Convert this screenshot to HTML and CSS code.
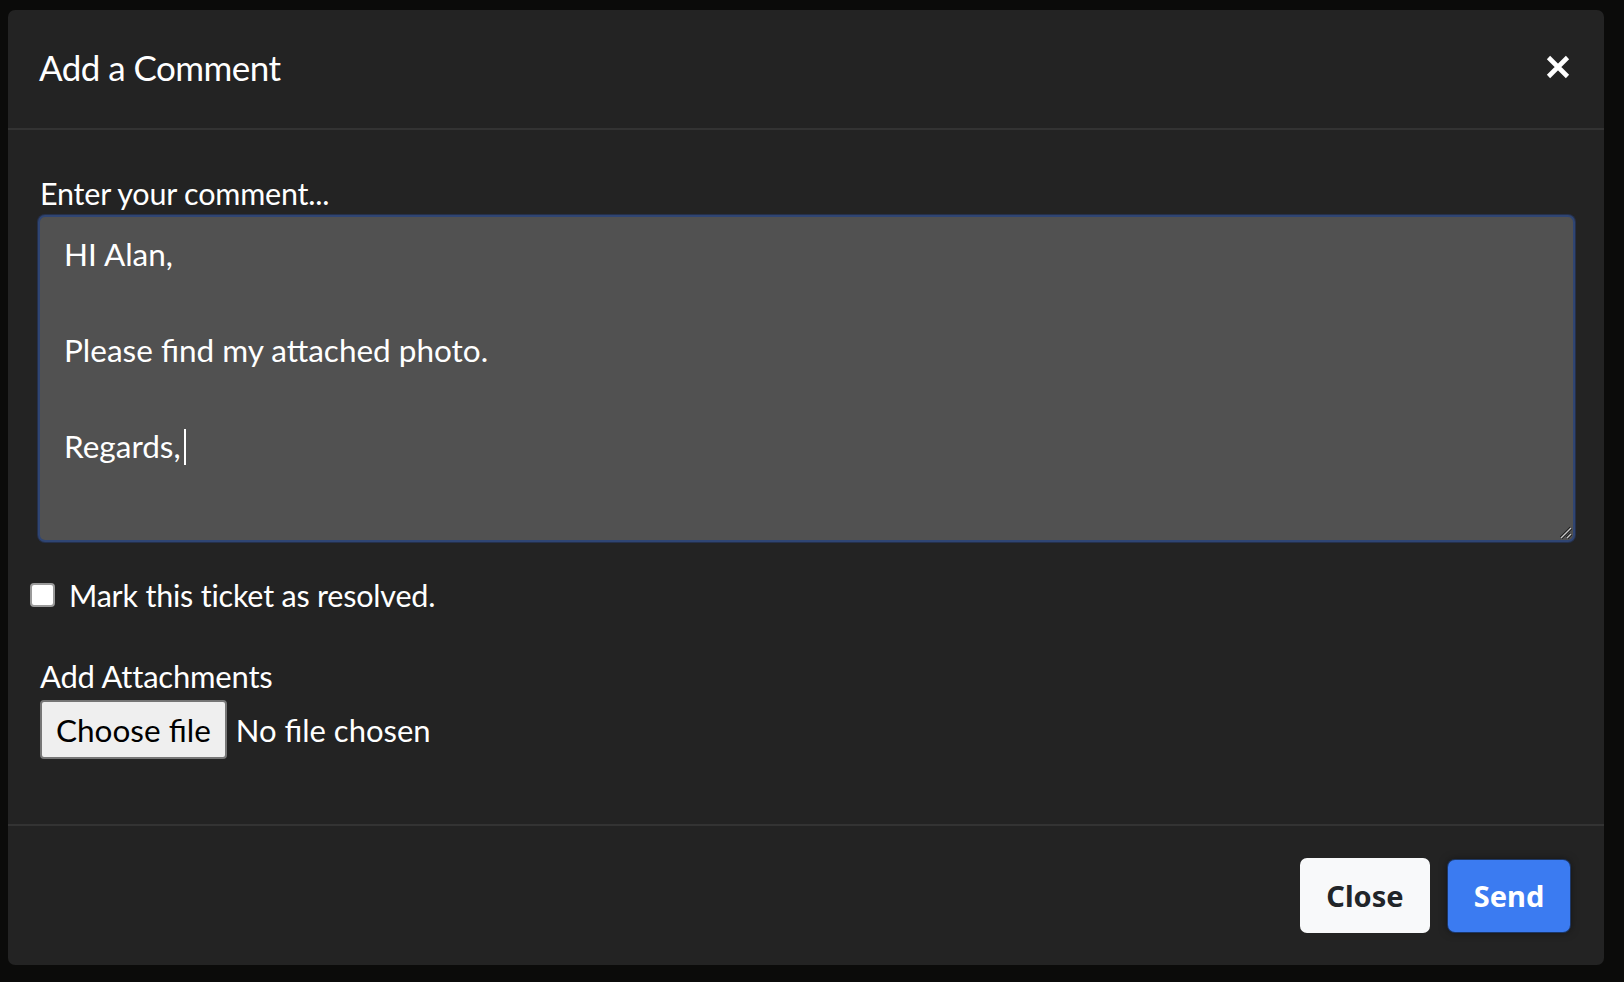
FILE: index.html
```html
<!DOCTYPE html>
<html lang="en">
<head>
<meta charset="utf-8">
<title>Add a Comment</title>
<link rel="stylesheet" href="styles.css">
</head>
<body>
<div class="modal">
  <div class="modal-header">
    <h1 class="modal-title">Add a Comment</h1>
    <button class="btn-x" aria-label="Close">
      <svg width="24" height="24" viewBox="0 0 24 24"><path d="M2.5 2.5 L21.5 21.5 M21.5 2.5 L2.5 21.5" stroke="#fff" stroke-width="4.6" stroke-linecap="butt"/></svg>
    </button>
  </div>
  <div class="modal-body">
    <label class="field-label">Enter your comment...</label>
    <div class="textbox" role="textbox">
      <div class="line">HI Alan,</div>
      <div class="line">&nbsp;</div>
      <div class="line">Please find my attached photo.</div>
      <div class="line">&nbsp;</div>
      <div class="line">Regards,<span class="caret"></span></div>
      <svg class="grip" width="14" height="14" viewBox="0 0 14 14"><path d="M3 13 L13 3 M9 13 L13 9" stroke="#1a1a1a" stroke-width="3.2"/><path d="M3 13 L13 3 M9 13 L13 9" stroke="#c8c8c8" stroke-width="1.4"/></svg>
    </div>
    <div class="check-row">
      <span class="checkbox"></span>
      <span class="check-label">Mark this ticket as resolved.</span>
    </div>
    <div class="attach-label">Add Attachments</div>
    <div class="file-row">
      <span class="file-btn">Choose file</span>
      <span class="file-name">No file chosen</span>
    </div>
  </div>
  <div class="modal-footer">
    <button class="btn btn-light">Close</button>
    <button class="btn btn-primary">Send</button>
  </div>
</div>
</body>
</html>
```

FILE: styles.css
```css
* { box-sizing: border-box; }
html, body { margin: 0; }
body {
  background: #0b0b0a;
  padding: 10px 20px 17px 8px;
  font-family: Lato, "Open Sans", sans-serif;
  color: #fff;
}
.modal {
  background: #232323;
  border-radius: 7px;
  height: 955px;
  display: flex;
  flex-direction: column;
}
.modal-header {
  height: 120px;
  flex: none;
  border-bottom: 2px solid #333333;
  display: flex;
  align-items: center;
  justify-content: space-between;
  padding: 0 34px 4px 31px;
}
.modal-title {
  margin: 0;
  font-size: 35px;
  font-weight: 400;
  line-height: 1.2;
  letter-spacing: -0.55px;
}
.btn-x {
  background: none;
  border: 0;
  padding: 0;
  width: 24px;
  height: 24px;
  display: flex;
  margin-top: -1px;
}
.modal-body {
  padding: 46px 28px 0 32px;
  flex: 1;
  display: flex;
  flex-direction: column;
  align-items: flex-start;
}
.field-label {
  font-size: 30.5px;
  line-height: 35px;
  letter-spacing: -0.2px;
}
.textbox {
  position: relative;
  margin-top: 4px;
  align-self: stretch;
  margin-left: -2px;
  margin-right: 1px;
  height: 327px;
  background: #515151;
  border: 2px solid #2f4573;
  box-shadow: 0 0 0 1px rgba(40, 60, 110, 0.55);
  border-radius: 7px;
  padding: 13px 24px;
  font-size: 31.5px;
  line-height: 48px;
}
.line { white-space: pre; }
.caret {
  display: inline-block;
  width: 2px;
  height: 36px;
  background: #fff;
  vertical-align: -7px;
  margin-left: 3px;
}
.grip {
  position: absolute;
  right: 1px;
  bottom: 1px;
}
.check-row {
  margin-top: 35px;
  margin-left: -10px;
  display: flex;
  align-items: center;
  height: 36px;
}
.checkbox {
  width: 25px;
  height: 24px;
  background: #fff;
  border: 2px solid #9a9a9a;
  border-radius: 4px;
  margin-right: 14px;
}
.check-label {
  font-size: 30.5px;
  line-height: 36px;
  letter-spacing: -0.2px;
}
.attach-label {
  margin-top: 45px;
  font-size: 31px;
  line-height: 36px;
  letter-spacing: -0.2px;
}
.file-row {
  margin-top: 6px;
  display: flex;
  align-items: center;
  gap: 9px;
}
.file-btn {
  height: 59px;
  padding: 0 14px;
  display: flex;
  align-items: center;
  background: #efefef;
  color: #000;
  border: 2px solid #767676;
  border-radius: 4px;
  font-size: 31.5px;
}
.file-name {
  font-size: 31px;
}
.modal-footer {
  height: 141px;
  flex: none;
  border-top: 2px solid #333333;
  display: flex;
  align-items: center;
  justify-content: flex-end;
  gap: 18px;
  padding-right: 34px;
}
.btn {
  font-family: "Noto Sans", "Open Sans", sans-serif;
  font-weight: 700;
  font-size: 29px;
  border: 0;
  border-radius: 7px;
  padding: 0;
  display: flex;
  align-items: center;
  justify-content: center;
}
.btn-light {
  width: 130px;
  height: 75px;
  background: #f8f9fa;
  color: #212529;
}
.btn-primary {
  width: 122px;
  height: 72px;
  background: #3b7bf1;
  color: #fff;
  box-shadow: 0 0 0 1px #1c3767, 0 0 8px rgba(0, 0, 0, 0.5);
}
```
